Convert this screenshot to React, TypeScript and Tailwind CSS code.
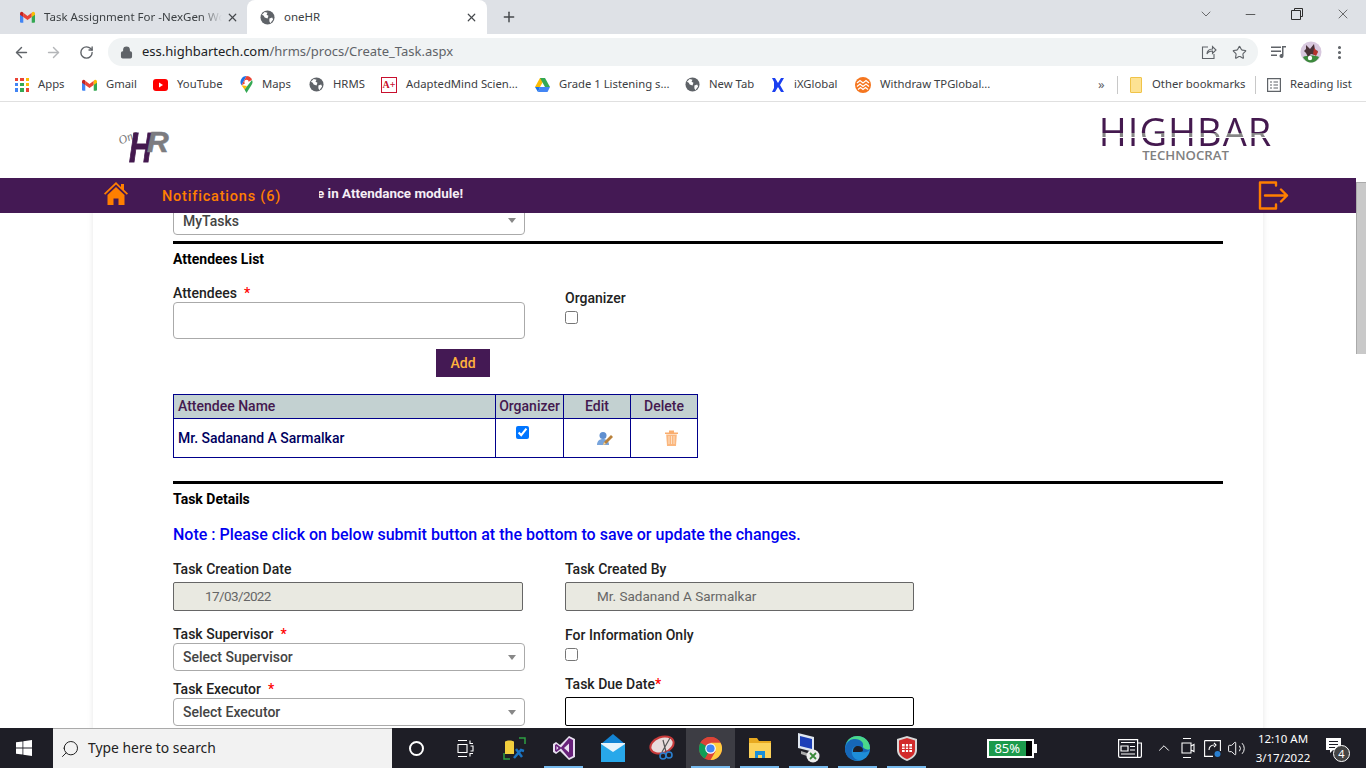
import { ArrowLeft, ArrowRight, ChevronDown, ChevronUp, Lock, Minus, MoreVertical, Plus, RotateCw, Search, Star, Volume2, X } from "lucide-react";

const Globe = () => (
  <svg width="15" height="15" viewBox="0 0 16 16" className="shrink-0">
    <circle cx="8" cy="8" r="7.5" fill="#5f6368" />
    <path d="M2 5l3-3 3 1-1 2 2 1-1 3-3-1-1-2zM10 9l3-1 1 2-3 4-1-2z" fill="#fff" />
  </svg>
);

const GmailIcon = () => (
  <svg width="15" height="12" viewBox="0 0 16 12" className="shrink-0">
    <path d="M0 2v9a1 1 0 001 1h2.5V5z" fill="#4285f4" />
    <path d="M16 2v9a1 1 0 01-1 1h-2.5V5z" fill="#34a853" />
    <path d="M3.5 6V1.5L8 5l4.500-3.500V6L8 9.200z" fill="#ea4335" />
    <path d="M0 2.500C0 .7 2 -.4 3.500 1.500V6L0 3.500z" fill="#c5221f" />
    <path d="M16 2.500C16 .7 14 -.4 12.500 1.500V6L16 3.500z" fill="#fbbc04" />
  </svg>
);

const YoutubeIcon = () => (
  <svg width="15" height="12" viewBox="0 0 15 12" className="shrink-0">
    <rect width="15" height="12" rx="3" fill="#f00" />
    <path d="M6 3.500L10 6 6 8.500z" fill="#fff" />
  </svg>
);

const MapsIcon = () => (
  <svg width="13" height="17" viewBox="0 0 13 17" className="shrink-0">
    <path d="M6.500 0a6 6 0 00-5 9.300z" fill="#1a73e8" />
    <path d="M6.500 0A6 6 0 0112 4L1.500 9.300z" fill="#ea4335" />
    <path d="M12 4c1 2 .5 3.500-.5 5L6.500 17l-2-3.500z" fill="#34a853" />
    <path d="M1.500 9.300l3 4.200L7 10z" fill="#fbbc04" />
    <circle cx="6.500" cy="6" r="2.200" fill="#fff" />
  </svg>
);

const AdaptedIcon = () => (
  <span className="flex h-[16px] w-[16px] shrink-0 items-center justify-center border border-[#c8102e] font-['Liberation_Serif'] text-[10px] font-bold text-[#c8102e]">
    A+
  </span>
);

const DriveIcon = () => (
  <svg width="15" height="14" viewBox="0 0 15 14" className="shrink-0">
    <path d="M5 0h5L5 9H0z" fill="#fbbc04" />
    <path d="M10 0l5 9h-5L5 0z" fill="#34a853" />
    <path d="M3 14l2-5h10l-2.500 5z" fill="#4285f4" />
    <path d="M0 9h5l-2 5z" fill="#1a73e8" />
  </svg>
);

const IxIcon = () => (
  <svg width="14" height="14" viewBox="0 0 14 14" className="shrink-0">
    <path d="M1 0h3l3 5 3-5h3L9 7l4 7h-3L7 9l-3 5H1l2-4V4z" fill="#1a3ff0" />
  </svg>
);

const WithdrawIcon = () => (
  <svg width="16" height="16" viewBox="0 0 16 16" className="shrink-0">
    <circle cx="8" cy="8" r="8" fill="#f5761f" />
    <path d="M2 6l3-2.500L8 6l3-2.500L14 6M2 9.500L5 7l3 2.500L11 7l3 2.500M3 12.500L5.500 10.500 8 12.500l2.500-2 2.500 2" fill="none" stroke="#fff" strokeWidth="1.300" />
  </svg>
);

const AppsIcon = () => (
  <span className="grid h-[14px] w-[14px] shrink-0 grid-cols-3 gap-[2px]">
    {["bg-[#ea4335]", "bg-[#ea4335]", "bg-[#fbbc04]", "bg-[#4285f4]", "bg-[#34a853]", "bg-[#fbbc04]", "bg-[#4285f4]", "bg-[#34a853]", "bg-[#ea4335]"].map((c, i) => (
      <span key={i} className={c} />
    ))}
  </span>
);

const bookmarks = [
  { label: "Apps", width: "w-[67px]", icon: <AppsIcon /> },
  { label: "Gmail", width: "w-[71px]", icon: <GmailIcon /> },
  { label: "YouTube", width: "w-[87px]", icon: <YoutubeIcon /> },
  { label: "Maps", width: "w-[69px]", icon: <MapsIcon /> },
  { label: "HRMS", width: "w-[72px]", icon: <Globe /> },
  { label: "AdaptedMind Scien...", width: "w-[154px]", icon: <AdaptedIcon /> },
  { label: "Grade 1 Listening s...", width: "w-[150px]", icon: <DriveIcon /> },
  { label: "New Tab", width: "w-[86px]", icon: <Globe /> },
  { label: "iXGlobal", width: "w-[84px]", icon: <IxIcon /> },
  { label: "Withdraw TPGlobal...", width: "w-[150px]", icon: <WithdrawIcon /> },
];

const BrowserChrome = () => (
  <div className="shrink-0 font-['Noto_Sans',sans-serif] text-[#3c4043]">
    <div className="flex h-[34px] items-end bg-[#dee1e6] pl-[8px]">
      <div className="flex h-[34px] w-[239px] items-center pl-[12px] pr-[6px] text-[11.5px]">
        <GmailIcon />
        <span className="ml-[9px] w-[178px] overflow-hidden whitespace-nowrap [mask-image:linear-gradient(to_right,#000_88%,transparent)]">Task Assignment For -NexGen Work</span>
        <X size={13} strokeWidth={2.2} className="ml-[4px] text-[#45484c]" />
      </div>
      <div className="flex h-[34px] w-[240px] items-center rounded-t-[8px] bg-white pl-[13px] pr-[9px] text-[11.5px]">
        <Globe />
        <span className="ml-[9px] flex-1">oneHR</span>
        <X size={13} strokeWidth={2.2} className="text-[#45484c]" />
      </div>
      <Plus size={16} strokeWidth={2.2} className="mb-[9px] ml-[14px] text-[#45484c]" />
      <div className="mb-[12px] ml-auto flex items-center pr-[15px] text-[#2d2d2d]">
        <ChevronDown size={16} strokeWidth={1} />
        <Minus size={15} strokeWidth={1.2} className="ml-[29px]" />
        <svg width="12" height="12" viewBox="0 0 12 12" fill="none" stroke="currentColor" className="ml-[33px]">
          <path d="M3.500 2.500v-2h8v8h-2M.5 2.500h9v9h-9z" />
        </svg>
        <X size={16} strokeWidth={1} className="ml-[32px]" />
      </div>
    </div>
    <div className="flex h-[34px] items-center bg-white pt-[2px]">
      <ArrowLeft size={17} strokeWidth={2} className="ml-[13px] text-[#5f6368]" />
      <ArrowRight size={17} strokeWidth={2} className="ml-[15px] text-[#b4b6b9]" />
      <RotateCw size={15} strokeWidth={2.2} className="ml-[17px] text-[#5f6368]" />
      <div className="ml-[14px] flex h-[28px] w-[1150px] items-center rounded-full bg-[#f0f3f4] pl-[12px] pr-[11px]">
        <Lock size={13} strokeWidth={2.5} className="fill-[#5f6368] text-[#5f6368]" />
        <span className="ml-[9px] flex-1 text-[13px] text-[#5f6368]">
          <span className="text-[#202124]">ess.highbartech.com</span>/hrms/procs/Create_Task.aspx
        </span>
        <svg width="16" height="16" viewBox="0 0 16 16" fill="none" stroke="#5f6368" strokeWidth="1.100">
          <path d="M7 3H1.500v11.500H13V10M6 10c0-3 2-5 5.500-5V2.500L15 6l-3.500 3.500V7C9 7 7 8 6 10z" />
        </svg>
        <Star size={15} strokeWidth={1.8} className="ml-[15px] text-[#5f6368]" />
      </div>
      <svg width="15" height="14" viewBox="0 0 15 14" className="ml-[13px]" fill="#5f6368">
        <path d="M0 1.500h10v1.500H0zM0 5.500h10V7H0zM0 9.500h6V11H0zM11 1h4v1.500h-2.500V11a2 2 0 11-1.500-2z" />
      </svg>
      <svg width="22" height="22" viewBox="0 0 22 22" className="ml-[14px]">
        <circle cx="11" cy="11" r="10.500" fill="#d8c8de" />
        <path d="M3 16c4-2 12-2 16 0-2 4-5 5.500-8 5.500S5 20 3 16z" fill="#3c8a3c" />
        <path d="M6 4l4 4 4-5 1 6 3 1-3 4-4-1-3 3-2-4-2-2 2-2z" fill="#4a3238" />
        <path d="M14 7l4 4-2 4-3-2z" fill="#b5322c" />
        <circle cx="10" cy="17" r="2.200" fill="#fff" />
      </svg>
      <MoreVertical size={17} strokeWidth={2.4} className="ml-[9px] text-[#5f6368]" />
    </div>
    <div className="flex h-[34px] items-center border-b border-[#e0e0e0] bg-white pl-[15px] text-[11.3px]">
      {bookmarks.map((b) => (
        <div key={b.label} className={`flex shrink-0 items-center gap-[9px] whitespace-nowrap ${b.width}`}>
          {b.icon}
          <span>{b.label}</span>
        </div>
      ))}
      <span className="ml-[93px] w-[8px] text-[13px] text-[#5f6368]">»</span>
      <span className="ml-[11px] h-[18px] w-px bg-[#c8c8c8]" />
      <span className="ml-[12px] h-[16px] w-[12px] shrink-0 rounded-[1px] border border-[#f0c348] bg-[#fde293]" />
      <span className="ml-[10px] w-[93px] whitespace-nowrap">Other bookmarks</span>
      <span className="ml-[10px] h-[18px] w-px bg-[#c8c8c8]" />
      <svg width="14" height="14" viewBox="0 0 14 14" className="ml-[11px] shrink-0" fill="none" stroke="#5f6368" strokeWidth="1.200">
        <path d="M.6.6h12.800v12.800H.6zM3 4h2M6.500 4H11M3 7h2M6.500 7H11M3 10h2M6.500 10H11" />
      </svg>
      <span className="ml-[9px] whitespace-nowrap">Reading list</span>
    </div>
  </div>
);

const Caret = () => <span className="absolute right-[8px] top-1/2 -translate-y-[2px] border-x-[4px] border-t-[5px] border-x-transparent border-t-[#888]" />;

const SelectBox = ({ text, cls }: { text: string; cls: string }) => (
  <div className={`relative flex w-[352px] items-center rounded-[4px] border border-[#aaa] bg-white pl-[9px] text-[14px] font-medium text-[#444] ${cls}`}>
    {text}
    <Caret />
  </div>
);

const FieldLabel = ({ text, star, cls = "" }: { text: string; star?: string; cls?: string }) => (
  <div className={`h-[18px] whitespace-nowrap text-[14px] font-medium leading-[18px] text-[#222] ${cls}`}>
    {text}
    {star !== undefined && <span className={`text-[#f00] ${star}`}>*</span>}
  </div>
);

const Rule = ({ cls }: { cls: string }) => <div className={`h-[3px] w-[1050px] bg-black ${cls}`} />;

const EditIcon = () => (
  <svg width="17" height="15" viewBox="0 0 17 15" className="mx-auto translate-x-[7px]">
    <circle cx="7" cy="4.500" r="3.500" fill="#5f8fd0" />
    <path d="M1 14c0-4 2.500-6 6-6s6 2 6 6z" fill="#78a4dc" />
    <path d="M15 4l2 2-7 7-3 1 1-3z" fill="#b8803a" />
    <path d="M8 11l2 2-3 1z" fill="#f0d8a8" />
  </svg>
);

const TrashIcon = () => (
  <svg width="13" height="16" viewBox="0 0 13 16" className="mx-auto translate-x-[7px]">
    <path d="M0 2.500h13V4H0zM4 2.500V.6h5v1.900" fill="#f9ad6e" />
    <path d="M1.200 4.500h10.600L11 16H2z" fill="#fbb77e" />
    <path d="M4 6v8M6.500 6v8M9 6v8" stroke="#fde0c5" strokeWidth="1" />
  </svg>
);

const PageHeader = () => (
  <div className="flex h-[76px] items-start justify-between bg-white pl-[118px] pr-[85px]">
    <div className="relative mt-[24px] h-[38px] w-[50px] font-['Liberation_Sans',sans-serif]">
      <span className="absolute left-0 top-[5px] -rotate-[24deg] font-['Liberation_Serif',serif] text-[12px] italic leading-none text-[#777]">One</span>
      <span className="absolute left-[11px] top-[3px] origin-left scale-x-75 text-[42px] font-bold italic leading-[38px] text-[#44194f] [-webkit-text-stroke:1px_#44194f]">H</span>
      <span className="absolute left-[29px] top-[-1px] text-[30px] font-bold italic leading-[33px] text-[#7c7c80] [-webkit-text-stroke:0.6px_#7c7c80]">R</span>
    </div>
    <div className="mt-[9px] flex w-[171px] flex-col items-center font-['Open_Sans',sans-serif]">
      <span className="whitespace-nowrap bg-[linear-gradient(to_bottom,#44194f_0,#44194f_55%,#858585_55%,#858585_65%,#fff_65%,#fff_68%,#44194f_68%,#44194f_100%)] bg-clip-text text-[38px] font-medium leading-[40px] tracking-[1px] text-transparent">
        HIGHBAR
      </span>
      <span className="-mt-[4px] text-[13.2px] font-semibold leading-[16px] text-[#808080]">TECHNOCRAT</span>
    </div>
  </div>
);

const NavBar = () => (
  <div className="relative z-10 flex h-[35px] items-center bg-[#441954] font-['Roboto',sans-serif]">
    <svg width="24" height="23" viewBox="0 0 24 23" className="ml-[104px] -mt-[4px] shrink-0" fill="#ff7f00">
      <path d="M12 0L0 11.500l1.200 1.300L12 2.600l10.800 10.200 1.200-1.300-4-3.800V2h-3v3z" />
      <path d="M3.500 13L12 5l8.500 8v10H14.500v-6.500h-5V23H3.500z" />
    </svg>
    <span className="ml-[34px] translate-y-[1px] text-[14.5px] font-medium tracking-[0.8px] text-[#ff7f00]">Notifications (6)</span>
    <div className="ml-[38px] w-[150px] -translate-y-[1px] overflow-hidden whitespace-nowrap text-[13.4px] font-bold text-[#f5eef5]">
      <span className="-ml-[2px] block">e in Attendance module!</span>
    </div>
    <svg width="31" height="29" viewBox="0 0 31 29" className="ml-auto mr-[67px] shrink-0" fill="none" stroke="#ff7f00" strokeWidth="2.400" strokeLinecap="round" strokeLinejoin="round">
      <path d="M18 4.500V1.500H2v26h16v-4M7 14.500h22M23 8.500l6 6-6 6" />
    </svg>
  </div>
);

const AttendeeSection = () => (
  <>
    <SelectBox text="MyTasks" cls="-mt-[8px] h-[30px] pt-[2px]" />
    <Rule cls="mt-[6px]" />
    <div className="mt-[5px] h-[20px] text-[14px] font-bold leading-[20px] text-black">Attendees List</div>
    <div className="mt-[15px] flex">
      <div className="w-[392px]">
        <FieldLabel text="Attendees" star="ml-[7px]" />
        <input className="block h-[37px] w-[352px] rounded-[4px] border border-[#aaa] bg-white" />
      </div>
      <div className="mt-[5px]">
        <FieldLabel text="Organizer" />
        <input type="checkbox" className="mt-[4px] block" />
      </div>
    </div>
    <button className="ml-[263px] mt-[10px] block h-[28px] w-[54px] bg-[#441954] text-[14px] font-medium text-[#ffb13d]">Add</button>
    <table className="mt-[17px] w-[524px] table-fixed border-collapse text-[14px] font-medium">
      <thead>
        <tr className="h-[24px] bg-[#c3d1d1] text-[#44194f]">
          <th className="w-[322px] border border-[#00008b] pl-[4px] text-left font-medium">Attendee Name</th>
          <th className="w-[68px] border border-[#00008b] font-medium">Organizer</th>
          <th className="w-[67px] border border-[#00008b] font-medium">Edit</th>
          <th className="w-[67px] border border-[#00008b] font-medium">Delete</th>
        </tr>
      </thead>
      <tbody>
        <tr className="h-[39px] text-[#000060]">
          <td className="border border-[#00008b] pl-[4px]">Mr. Sadanand A Sarmalkar</td>
          <td className="border border-[#00008b] pb-[12px] pl-[20px] pt-0">
            <input type="checkbox" defaultChecked className="block" />
          </td>
          <td className="border border-[#00008b]"><EditIcon /></td>
          <td className="border border-[#00008b]"><TrashIcon /></td>
        </tr>
      </tbody>
    </table>
  </>
);

const ReadonlyInput = ({ value, cls }: { value: string; cls: string }) => (
  <input disabled value={value} className={`mt-[4px] block h-[29px] rounded-[2px] border border-[#666] bg-[#e9e9e1] pb-[1px] pl-[31px] text-[13.5px] text-[#666] ${cls}`} />
);

const TaskDetails = () => (
  <>
    <Rule cls="mt-[23px]" />
    <div className="mt-[5px] h-[20px] text-[14px] font-bold leading-[20px] text-black">Task Details</div>
    <div className="mt-[15px] h-[22px] whitespace-nowrap text-[16px] font-medium leading-[22px] text-[#0000f0]">
      Note : Please click on below submit button at the bottom to save or update the changes.
    </div>
    <div className="mt-[14px] flex">
      <div className="w-[392px]">
        <FieldLabel text="Task Creation Date" />
        <ReadonlyInput value="17/03/2022" cls="w-[350px] tracking-[-0.6px]" />
        <FieldLabel text="Task Supervisor" star="ml-[7px]" cls="mt-[14px]" />
        <SelectBox text="Select Supervisor" cls="h-[28px]" />
        <FieldLabel text="Task Executor" star="ml-[7px]" cls="mt-[9px]" />
        <SelectBox text="Select Executor" cls="h-[28px]" />
      </div>
      <div>
        <FieldLabel text="Task Created By" />
        <ReadonlyInput value="Mr. Sadanand A Sarmalkar" cls="w-[349px]" />
        <FieldLabel text="For Information Only" cls="mt-[15px]" />
        <input type="checkbox" className="mt-[4px] block" />
        <FieldLabel text="Task Due Date" star="" cls="mt-[14px]" />
        <input className="mt-[4px] block h-[29px] w-[349px] rounded-[2px] border border-black bg-white" />
      </div>
    </div>
  </>
);

const TaskButton = ({ active, children }: { active?: boolean; children: React.ReactNode }) => (
  <div className={`relative flex h-full w-[49px] shrink-0 items-center justify-center ${active ? "bg-[#3d3d44]" : ""}`}>
    {children}
  </div>
);

const Indicator = () => <span className="absolute bottom-0 left-[5px] right-[5px] h-[2px] bg-[#76b9ed]" />;

const Taskbar = () => (
  <div className="flex h-[40px] shrink-0 items-center bg-[#1e1e26] font-['Noto_Sans',sans-serif] text-white">
    <div className="flex h-full w-[53px] items-center justify-center pr-[5px]">
      <svg width="16" height="16" viewBox="0 0 16 16" fill="#fff">
        <path d="M0 2.300l6.500-.9v6.200H0zM7.300 1.300L16 0v7.600H7.300zM0 8.400h6.500v6.200L0 13.700zM7.300 8.400H16V16l-8.700-1.200z" />
      </svg>
    </div>
    <div className="flex h-full w-[339px] items-center border-t border-[#aaa] bg-[#f2f2f2] pl-[7px] text-[13.9px] text-[#222]">
      <Search size={20} strokeWidth={1.2} className="-scale-x-100" />
      <span className="ml-[8px]">Type here to search</span>
    </div>
    <TaskButton>
      <span className="-ml-[1px] h-[15px] w-[15px] rounded-full border-[2.500px] border-white" />
    </TaskButton>
    <TaskButton>
      <svg width="17" height="17" viewBox="0 0 17 17" fill="none" stroke="#fff" strokeWidth="1.100">
        <path d="M1 .5h9M1 16.500h9M1 4.500h9v8H1zM13 .5v3h3M13 16.500v-3h3M13.500 6h2.500v5h-2.500" />
      </svg>
    </TaskButton>
    <TaskButton>
      <svg width="23" height="23" viewBox="0 0 23 23">
        <path d="M2 5c0-2 9-2 9 0v12H2z" fill="#f2cf3d" />
        <path d="M1 16v6h6M16 1h6v6" fill="none" stroke="#2ea043" strokeWidth="1.500" />
        <path d="M11 21l7-8 3 1M13 12l6 8" stroke="#1a74c4" strokeWidth="2.500" fill="none" />
      </svg>
    </TaskButton>
    <TaskButton>
      <svg width="22" height="24" viewBox="0 0 22 24">
        <path d="M16 0l6 3v18l-6 3L7 15l-4 3-3-2V8l3-2 4 3z" fill="#e8e0f0" />
        <path d="M16 2l4 2v16l-4 2-8-9.500L3.500 16 2 15V9l1.500-1L8 11.500zM16 7.500L11 12l5 4.500zM3.500 10v4l2-2z" fill="#68217a" fillRule="evenodd" />
      </svg>
      <Indicator />
    </TaskButton>
    <TaskButton>
      <svg width="24" height="28" viewBox="0 0 24 28">
        <path d="M12 0l12 10H0z" fill="#1384d4" />
        <rect y="9" width="24" height="19" fill="#28a8ea" />
        <path d="M0 10l12 8 12-8v-1H0z" fill="#e8f4fc" />
      </svg>
    </TaskButton>
    <TaskButton>
      <svg width="26" height="26" viewBox="0 0 26 26">
        <ellipse cx="13" cy="10" rx="12" ry="8" transform="rotate(-20 13 10)" fill="#e8dcdc" stroke="#c83a3a" strokeWidth="2" />
        <path d="M14 5l3 12M21 3l-8 14" stroke="#555" strokeWidth="1.200" />
        <circle cx="14" cy="21" r="3" fill="none" stroke="#2a7fd0" strokeWidth="1.600" />
        <circle cx="20" cy="20" r="3" fill="none" stroke="#2a7fd0" strokeWidth="1.600" />
      </svg>
    </TaskButton>
    <TaskButton active>
      <svg width="23" height="23" viewBox="0 0 24 24">
        <circle cx="12" cy="12" r="12" fill="#dc4437" />
        <path d="M12 12L1.600 6A12 12 0 0112 0a12 12 0 0110.400 6H12z" fill="#dc4437" />
        <path d="M12 12l-5 9-1 1.500A12 12 0 011.600 6z" fill="#0f9d58" />
        <path d="M12 6h10.400A12 12 0 0112 24l5.200-9z" fill="#ffcd40" />
        <circle cx="12" cy="12" r="5.500" fill="#fff" />
        <circle cx="12" cy="12" r="4.300" fill="#4285f4" />
      </svg>
      <Indicator />
    </TaskButton>
    <TaskButton>
      <svg width="22" height="22" viewBox="0 0 22 22">
        <path d="M0 1h8l2 3h12v4H0z" fill="#e8a920" />
        <rect y="6" width="22" height="15" fill="#fcd25a" />
        <path d="M6 14h10v7h-3v-3H9v3H6z" fill="#1a8fd8" />
      </svg>
      <Indicator />
    </TaskButton>
    <TaskButton>
      <svg width="24" height="30" viewBox="0 0 24 30">
        <path d="M1 0l16 4v15L1 15z" fill="#dfe6f0" />
        <path d="M3 3l12 3v10L3 13z" fill="#1c3fb8" />
        <path d="M4 18l12 4v3L4 21z" fill="#aaa" />
        <circle cx="16" cy="23" r="6.500" fill="#ececec" />
        <path d="M13 20l6 6M19 20l-6 6" stroke="#3a8a3a" strokeWidth="1.800" />
      </svg>
      <Indicator />
    </TaskButton>
    <TaskButton>
      <svg width="25" height="25" viewBox="0 0 25 25">
        <circle cx="12.500" cy="12.500" r="12.500" fill="#1e8ed8" />
        <path d="M0 12.500C2 5 8 1 13 1c6 0 12 4 12 11 0 4-5 5-9 4 2-3 0-6-3.500-6C8 10 6 14 7 18c1 4 5 7 10 6-3 1-17 2-17-11.500z" fill="#1667b8" />
        <path d="M25 12.500C25 5 19 0 12.500 0 7 0 2.500 3 .8 8 3 4 7 3 10 3c6 0 9 4 8 7-1 3 7 5 7 2.500z" fill="#4bd88a" />
        <path d="M8 15c0-3 2-5 5-5s5 2 5 4c0 1-1 2-3 2H8z" fill="#1e1e26" />
      </svg>
      <Indicator />
    </TaskButton>
    <TaskButton>
      <svg width="20" height="25" viewBox="0 0 20 25">
        <path d="M10 0l10 3v11c0 6-5 9-10 11C5 23 0 20 0 14V3z" fill="#d8d8d8" />
        <path d="M10 2l8 2.500V14c0 5-4 7.500-8 9-4-1.500-8-4-8-9V4.500z" fill="#d22b2b" />
        <path d="M5 8h10v8H5z" fill="#fff" />
        <path d="M5 11h10M5 13.500h10M8.300 8v8M11.700 8v8" stroke="#d22b2b" strokeWidth="1.200" />
      </svg>
      <Indicator />
    </TaskButton>
    <div className="ml-[56px] flex h-[19px] w-[50px] shrink-0 items-center">
      <div className="flex h-[19px] w-[47px] border-2 border-white bg-black">
        <span className="flex w-[85%] items-center justify-center bg-[#1c9a4c] text-[13px] leading-none">85%</span>
      </div>
      <span className="h-[9px] w-[3px] bg-white" />
    </div>
    <svg width="24" height="19" viewBox="0 0 24 19" className="ml-[81px] shrink-0" fill="none" stroke="#fff" strokeWidth="1.200">
      <path d="M.6.6h19v17.800H2a1.400 1.400 0 01-1.400-1.400zM19.600 4h3.800v13a1.400 1.400 0 01-1.400 1.400h-2.400M3 3.500h14M3 7h7v5H3zM12 7.500h5M12 11h5M3 15h14" />
    </svg>
    <ChevronUp size={18} strokeWidth={1.3} className="ml-[13px] shrink-0" />
    <svg width="14" height="22" viewBox="0 0 14 22" className="ml-[8px] shrink-0" fill="none" stroke="#fff" strokeWidth="1.100">
      <path d="M2 1.500h8M2 20.500h8M1 6h9v10H1zM10 9l3-1.500v7L10 13" />
    </svg>
    <svg width="17" height="17" viewBox="0 0 17 17" className="ml-[9px] shrink-0" fill="none" stroke="#fff" strokeWidth="1.100">
      <path d="M.6.6h15.800V11M.6.6v15.800H9M5 10c0-3 2-5 5-5M10 3l2 2-2 2" />
      <circle cx="13.500" cy="14" r="3" fill="#2a7fd0" stroke="none" />
    </svg>
    <Volume2 size={19} strokeWidth={1.2} className="ml-[6px] shrink-0" />
    <div className="ml-[2px] w-[70px] shrink-0 text-center text-[11.5px] leading-[19px]">
      <div>12:10 AM</div>
      <div>3/17/2022</div>
    </div>
    <div className="relative ml-[8px] h-[22px] w-[26px] shrink-0">
      <svg width="15" height="15" viewBox="0 0 15 15" className="absolute left-[0px] top-[1px]" fill="#fff">
        <path d="M0 0h15v12H7l-3 3v-3H0zM3 3v1h9V3zM3 6v1h9V6zM3 9v1h6V9z" fillRule="evenodd" />
      </svg>
      <span className="absolute bottom-[-3px] right-[2px] flex h-[17px] w-[17px] items-center justify-center rounded-full border border-white bg-[#444] text-[11px] leading-none">4</span>
    </div>
  </div>
);

const App = () => {
  return (
    <div className="flex h-[768px] w-[1366px] flex-col overflow-hidden bg-white font-['Roboto',sans-serif]">
      <BrowserChrome />
      <div className="flex min-h-0 flex-1">
        <div className="flex w-[1356px] flex-col">
          <PageHeader />
          <NavBar />
          <div className="min-h-0 flex-1 overflow-hidden">
            <div className="ml-[93px] h-[700px] w-[1170px] pl-[80px] shadow-[0_0_6px_rgba(0,0,0,0.1)]">
              <AttendeeSection />
              <TaskDetails />
            </div>
          </div>
        </div>
        <div className="w-[10px] pt-[80px]">
          <div className="h-[172px] border-l border-t border-[#aaa] bg-[#c9c9c9]" />
        </div>
      </div>
      <Taskbar />
    </div>
  );
};

export default App;
